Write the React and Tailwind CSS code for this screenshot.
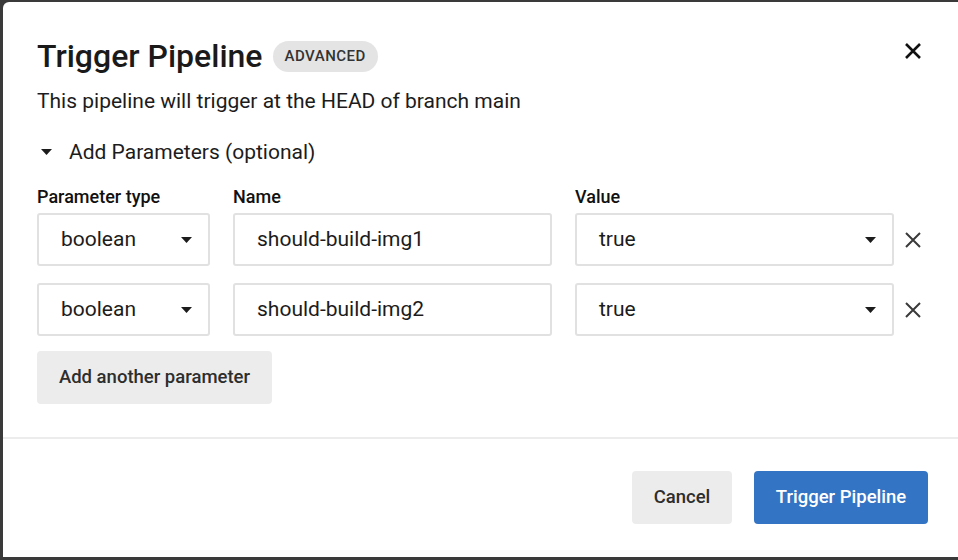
const Caret = ({ className = "" }) => (
  <svg width="11" height="6" viewBox="0 0 11 6" className={className}>
    <path d="M0 0h11L5.5 6z" fill="currentColor" />
  </svg>
);

const Cross = ({ className = "", stroke = 2 }) => (
  <svg width="16" height="16" viewBox="0 0 16 16" className={className}>
    <path d="M1 1L15 15M15 1L1 15" stroke="currentColor" strokeWidth={stroke} fill="none" />
  </svg>
);

function SelectBox({ value, width }) {
  return (
    <div
      className={`${width} h-[53px] flex items-center justify-between pl-[22px] pr-[16px] border-2 border-[#e1e1e1] rounded-[3px] bg-white text-[21px] text-[#1c1c1c]`}
    >
      <span>{value}</span>
      <Caret className="text-[#1c1c1c]" />
    </div>
  );
}

function ParamRow({ type, name, value }) {
  return (
    <div className="flex items-center">
      <SelectBox value={type} width="w-[173px] shrink-0" />
      <div className="ml-[23px] w-[319px] shrink-0 h-[53px] flex items-center pl-[22px] border-2 border-[#e1e1e1] rounded-[3px] bg-white text-[21px] text-[#1c1c1c]">
        {name}
      </div>
      <div className="ml-[23px] shrink-0">
        <SelectBox value={value} width="w-[319px]" />
      </div>
      <Cross className="ml-[11px] shrink-0 text-[#3a3a3a]" stroke={2} />
    </div>
  );
}

export default function App() {
  return (
    <div
      className="w-[958px] h-[560px] bg-[#3a3a3a] pl-[3px] pt-[2px] overflow-hidden"
      style={{ fontFamily: "Roboto, 'Open Sans', sans-serif" }}
    >
      <div className="w-[955px] h-[555px] bg-white rounded-tl-[6px] flex flex-col">
        <div className="px-[34px] pt-[37px]">
          <div className="flex items-start justify-between">
            <div className="flex items-center">
              <h1 className="text-[32px] leading-[34px] font-medium text-[#1a1a1a]">
                Trigger Pipeline
              </h1>
              <span className="ml-[10px] h-[31px] px-[12px] flex items-center rounded-full bg-[#e4e4e4] text-[15px] font-medium tracking-[0.5px] text-[#333]">
                ADVANCED
              </span>
            </div>
            <Cross className="mt-[4px] mr-[3px] text-[#111]" stroke={2.6} />
          </div>
          <p className="mt-[15px] text-[21px] leading-[26px] text-[#1c1c1c]">
            This pipeline will trigger at the HEAD of branch main
          </p>
          <div className="mt-[25px] flex items-center text-[21px] leading-[26px] text-[#1c1c1c]">
            <Caret className="ml-[4px] mr-[17px]" />
            <span>Add Parameters (optional)</span>
          </div>
          <div className="mt-[21px] flex text-[18px] leading-[22px] font-medium text-[#111]">
            <span className="w-[196px]">Parameter type</span>
            <span className="w-[342px]">Name</span>
            <span>Value</span>
          </div>
          <div className="mt-[5px] flex flex-col gap-[17px]">
            <ParamRow type="boolean" name="should-build-img1" value="true" />
            <ParamRow type="boolean" name="should-build-img2" value="true" />
          </div>
          <button className="mt-[15px] h-[53px] w-[235px] rounded-[4px] bg-[#ececec] text-[18.5px] font-medium text-[#2e2e2e]">
            Add another parameter
          </button>
        </div>
        <div className="mt-[33px] h-[2px] bg-[#ececec]" />
        <div className="flex justify-end gap-[22px] pr-[30px] pt-[32px]">
          <button className="h-[53px] w-[100px] rounded-[4px] bg-[#ececec] text-[18.5px] font-medium text-[#2e2e2e]">
            Cancel
          </button>
          <button className="h-[53px] w-[174px] rounded-[4px] bg-[#3474c5] text-[18.5px] font-medium text-white">
            Trigger Pipeline
          </button>
        </div>
      </div>
    </div>
  );
}
